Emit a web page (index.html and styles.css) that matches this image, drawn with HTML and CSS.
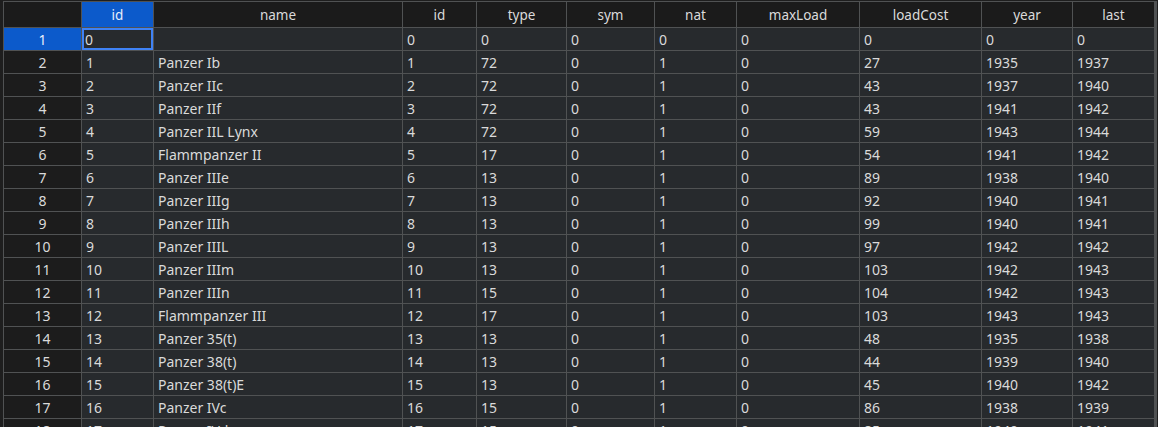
FILE: index.html
```html
<!DOCTYPE html>
<html>
<head>
<meta charset="utf-8">
<link rel="stylesheet" href="styles.css">
</head>
<body>
<div class="grid">
  <div class="hd corner"></div><div class="hd sel">id</div><div class="hd">name</div><div class="hd">id</div><div class="hd">type</div><div class="hd">sym</div><div class="hd">nat</div><div class="hd">maxLoad</div><div class="hd">loadCost</div><div class="hd">year</div><div class="hd">last</div>

  <div class="rh sel">1</div><div class="c cur">0</div><div class="c"></div><div class="c">0</div><div class="c">0</div><div class="c">0</div><div class="c">0</div><div class="c">0</div><div class="c">0</div><div class="c">0</div><div class="c">0</div>
  <div class="rh">2</div><div class="c">1</div><div class="c">Panzer Ib</div><div class="c">1</div><div class="c">72</div><div class="c">0</div><div class="c">1</div><div class="c">0</div><div class="c">27</div><div class="c">1935</div><div class="c">1937</div>
  <div class="rh">3</div><div class="c">2</div><div class="c">Panzer IIc</div><div class="c">2</div><div class="c">72</div><div class="c">0</div><div class="c">1</div><div class="c">0</div><div class="c">43</div><div class="c">1937</div><div class="c">1940</div>
  <div class="rh">4</div><div class="c">3</div><div class="c">Panzer IIf</div><div class="c">3</div><div class="c">72</div><div class="c">0</div><div class="c">1</div><div class="c">0</div><div class="c">43</div><div class="c">1941</div><div class="c">1942</div>
  <div class="rh">5</div><div class="c">4</div><div class="c">Panzer IIL Lynx</div><div class="c">4</div><div class="c">72</div><div class="c">0</div><div class="c">1</div><div class="c">0</div><div class="c">59</div><div class="c">1943</div><div class="c">1944</div>
  <div class="rh">6</div><div class="c">5</div><div class="c">Flammpanzer II</div><div class="c">5</div><div class="c">17</div><div class="c">0</div><div class="c">1</div><div class="c">0</div><div class="c">54</div><div class="c">1941</div><div class="c">1942</div>
  <div class="rh">7</div><div class="c">6</div><div class="c">Panzer IIIe</div><div class="c">6</div><div class="c">13</div><div class="c">0</div><div class="c">1</div><div class="c">0</div><div class="c">89</div><div class="c">1938</div><div class="c">1940</div>
  <div class="rh">8</div><div class="c">7</div><div class="c">Panzer IIIg</div><div class="c">7</div><div class="c">13</div><div class="c">0</div><div class="c">1</div><div class="c">0</div><div class="c">92</div><div class="c">1940</div><div class="c">1941</div>
  <div class="rh">9</div><div class="c">8</div><div class="c">Panzer IIIh</div><div class="c">8</div><div class="c">13</div><div class="c">0</div><div class="c">1</div><div class="c">0</div><div class="c">99</div><div class="c">1940</div><div class="c">1941</div>
  <div class="rh">10</div><div class="c">9</div><div class="c">Panzer IIIL</div><div class="c">9</div><div class="c">13</div><div class="c">0</div><div class="c">1</div><div class="c">0</div><div class="c">97</div><div class="c">1942</div><div class="c">1942</div>
  <div class="rh">11</div><div class="c">10</div><div class="c">Panzer IIIm</div><div class="c">10</div><div class="c">13</div><div class="c">0</div><div class="c">1</div><div class="c">0</div><div class="c">103</div><div class="c">1942</div><div class="c">1943</div>
  <div class="rh">12</div><div class="c">11</div><div class="c">Panzer IIIn</div><div class="c">11</div><div class="c">15</div><div class="c">0</div><div class="c">1</div><div class="c">0</div><div class="c">104</div><div class="c">1942</div><div class="c">1943</div>
  <div class="rh">13</div><div class="c">12</div><div class="c">Flammpanzer III</div><div class="c">12</div><div class="c">17</div><div class="c">0</div><div class="c">1</div><div class="c">0</div><div class="c">103</div><div class="c">1943</div><div class="c">1943</div>
  <div class="rh">14</div><div class="c">13</div><div class="c">Panzer 35(t)</div><div class="c">13</div><div class="c">13</div><div class="c">0</div><div class="c">1</div><div class="c">0</div><div class="c">48</div><div class="c">1935</div><div class="c">1938</div>
  <div class="rh">15</div><div class="c">14</div><div class="c">Panzer 38(t)</div><div class="c">14</div><div class="c">13</div><div class="c">0</div><div class="c">1</div><div class="c">0</div><div class="c">44</div><div class="c">1939</div><div class="c">1940</div>
  <div class="rh">16</div><div class="c">15</div><div class="c">Panzer 38(t)E</div><div class="c">15</div><div class="c">13</div><div class="c">0</div><div class="c">1</div><div class="c">0</div><div class="c">45</div><div class="c">1940</div><div class="c">1942</div>
  <div class="rh">17</div><div class="c">16</div><div class="c">Panzer IVc</div><div class="c">16</div><div class="c">15</div><div class="c">0</div><div class="c">1</div><div class="c">0</div><div class="c">86</div><div class="c">1938</div><div class="c">1939</div>
  <div class="rh">18</div><div class="c">17</div><div class="c">Panzer IVd</div><div class="c">17</div><div class="c">15</div><div class="c">0</div><div class="c">1</div><div class="c">0</div><div class="c">85</div><div class="c">1940</div><div class="c">1941</div>
</div>
</body>
</html>
```

FILE: styles.css
```css
html, body {
  margin: 0;
  padding: 0;
  background: #1e1e1e;
  overflow: hidden;
  height: 427px;
}
.grid {
  margin: 1px 0 0 3px;
  width: 1152px;
  display: grid;
  grid-template-columns: 77px 71px 248px 73px 89px 87px 81px 122px 121px 90px 81px;
  grid-auto-rows: 22px;
  grid-template-rows: 25px;
  gap: 1px;
  padding: 1px;
  background: #505253;
  font-family: "Noto Sans", "Open Sans", sans-serif;
  font-size: 14px;
  color: #dadada;
}
.hd {
  background: #1b1b1b;
  display: flex;
  align-items: center;
  justify-content: center;
  line-height: 1;
  padding-top: 2px;
  font-size: 13.5px;
}
.hd.sel {
  background: #0c5acb;
  color: #e8eefa;
}
.rh {
  background: #1c1c1c;
  display: flex;
  align-items: center;
  justify-content: center;
  line-height: 1;
  padding-top: 2px;
}
.rh.sel {
  background: #0c5acb;
  color: #e8eefa;
}
.c {
  background: #272a2d;
  display: flex;
  align-items: center;
  padding: 2px 0 0 4px;
  line-height: 1;
  white-space: nowrap;
  overflow: hidden;
}
.c.cur {
  box-shadow: inset 0 0 0 2px #3f82f5;
  padding-left: 3px;
}
```
